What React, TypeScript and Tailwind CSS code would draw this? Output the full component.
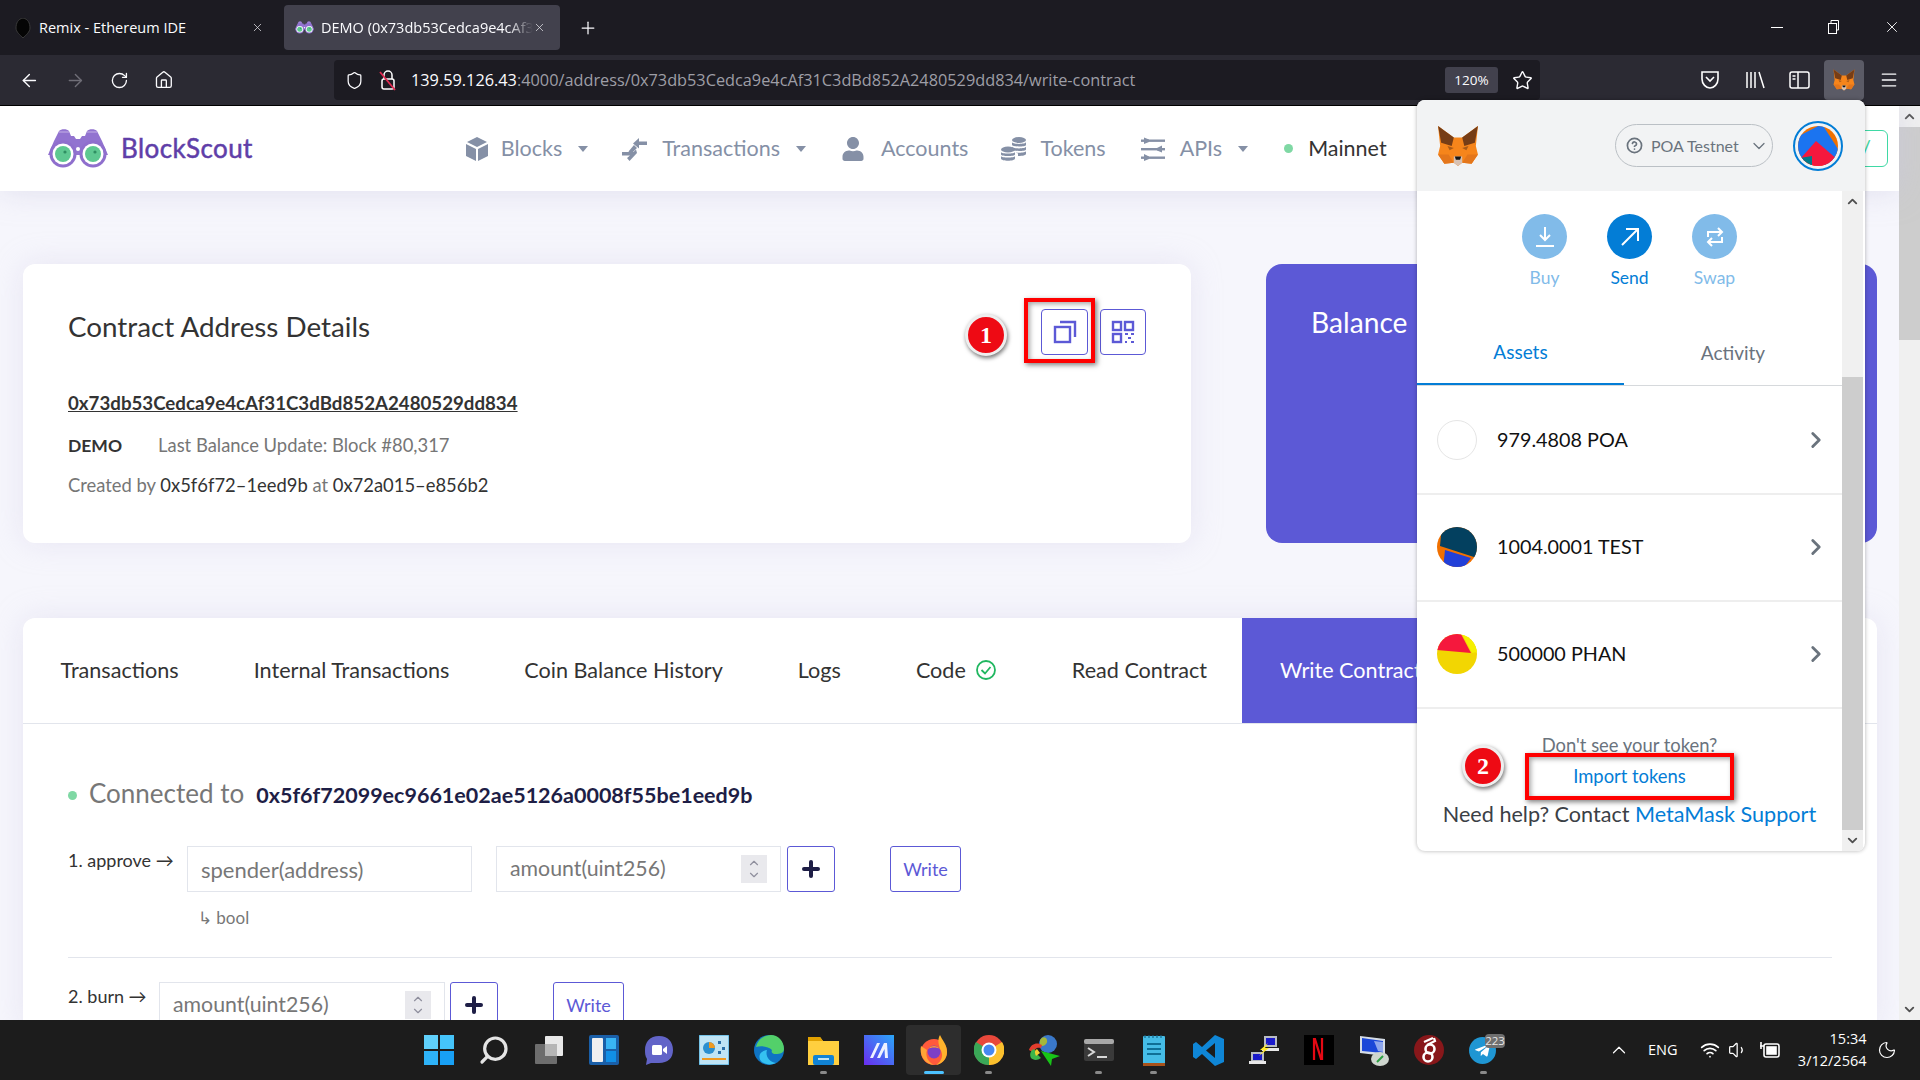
import { ArrowLeft, ArrowRight, ChevronDown, ChevronRight, ChevronUp, House, Menu, RotateCw, Shield, Star, X, Plus, Wifi, Volume1, Moon, Search, CircleHelp } from "lucide-react";
import { FaUser, FaTelegramPlane } from "react-icons/fa";

const site = "font-['Lato',sans-serif]";
const mm = "font-['Lato',sans-serif]";
const ui = "font-['Open_Sans',sans-serif]";

function Fox({ size }: { size: number }) {
  return (
    <svg width={size} height={size} viewBox="0 0 40 40">
      <polygon points="1,1 16,12 24,12 39,1 37,20 39,28 33,37 24,36 20,39 16,36 7,37 1,28 3,20" fill="#f6851b" />
      <polygon points="1,1 16,12 14,20 4,17" fill="#763d16" />
      <polygon points="39,1 24,12 26,20 36,17" fill="#763d16" />
      <polygon points="1,28 7,37 16,36 11,28" fill="#e4761b" />
      <polygon points="39,28 33,37 24,36 29,28" fill="#e4761b" />
      <polygon points="16,30 24,30 24,36 20,39 16,36" fill="#d7c1b3" />
      <polygon points="17,30 23,30 22,33 18,33" fill="#161616" />
      <polygon points="10,20 16,22 12,24" fill="#763d16" opacity="0.6" />
      <polygon points="30,20 24,22 28,24" fill="#763d16" opacity="0.6" />
    </svg>
  );
}

function Binoculars({ size }: { size: number }) {
  return (
    <svg width={size} height={size * 0.667} viewBox="0 0 60 40">
      <path d="M11 3C13 0.5 19 0.5 21 3L23 8H26L28 11H32L34 8H37L39 3C41 0.5 47 0.5 49 3L54 13L60 27H0L6 13Z" fill="#9273d0" />
      <path d="M11 4H21M39 4H49" stroke="#c4b2e6" strokeWidth="1.2" />
      <circle cx="15" cy="26" r="13.5" fill="#8f6fcd" />
      <circle cx="45" cy="26" r="13.5" fill="#8f6fcd" />
      <circle cx="15" cy="26" r="10.5" fill="#fff" />
      <circle cx="45" cy="26" r="10.5" fill="#fff" />
      <circle cx="15" cy="26" r="8" fill="#5ec891" />
      <circle cx="45" cy="26" r="8" fill="#5ec891" />
      <circle cx="17" cy="24" r="1.6" fill="#2f8f62" />
      <circle cx="47" cy="24" r="1.6" fill="#2f8f62" />
      <circle cx="30" cy="21" r="2" fill="#fff" />
    </svg>
  );
}

function Caret({ className = "" }: { className?: string }) {
  return <span className={`inline-block h-0 w-0 border-x-[5.5px] border-t-[6px] border-x-transparent border-t-[#8590a6] ${className}`} />;
}

function TabClose() {
  return <X size={13} strokeWidth={1.4} className="text-[#e0e0e6]" />;
}

function BrowserChrome() {
  return (
    <>
      <div className={`flex h-[55px] items-start bg-[#1c1b22] text-[14.5px] text-[#fbfbfe] ${ui}`}>
        <div className="mt-[5px] flex h-[45px] w-[276px] items-center pl-[14px] pr-[12px]">
          <svg width="18" height="20" viewBox="0 0 18 20"><path d="M9 0 C14 1 16 5 16 10 C16 14 12 17 9 20 C6 17 2 14 2 10 C2 5 4 1 9 0Z" fill="#050505" stroke="#3a3a3a" /></svg>
          <span className="ml-[7px] flex-1">Remix - Ethereum IDE</span>
          <TabClose />
        </div>
        <div className="mt-[5px] ml-[8px] flex h-[45px] w-[276px] items-center rounded-[4px] bg-[#42414d] pl-[11px] pr-[14px]">
          <Binoculars size={19} />
          <span className="ml-[7px] w-[212px] whitespace-nowrap [mask-image:linear-gradient(to_right,black_88%,transparent)]">DEMO (0x73db53Cedca9e4cAf3</span>
          <span className="ml-auto"><TabClose /></span>
        </div>
        <Plus size={20} strokeWidth={1.5} className="ml-[18px] mt-[18px]" />
        <div className="ml-auto mt-[18px] flex items-center gap-[43px] pr-[19px]">
          <div className="h-px w-[12px] bg-white" />
          <svg width="14" height="14" viewBox="0 0 14 14" fill="none" stroke="#fff"><rect x="2.5" y="3.5" width="8" height="10" /><path d="M5 3V0.5H12.5V10H10.5" /></svg>
          <X size={18} strokeWidth={1.2} className="text-white" />
        </div>
      </div>
      <div className="flex h-[51px] items-start border-b border-black bg-[#2b2a33] pt-[5px] text-[#fbfbfe]">
        <div className="flex h-[40px] w-[174px] items-center gap-[25px] pl-[19px]">
          <ArrowLeft size={21} strokeWidth={1.6} />
          <ArrowRight size={21} strokeWidth={1.6} className="text-[#6f6e77]" />
          <RotateCw size={19} strokeWidth={1.7} />
          <House size={20} strokeWidth={1.6} />
        </div>
        <div className="ml-[160px] flex h-[40px] w-[1206px] items-center rounded-[4px] bg-[#1c1b22] pl-[11px] pr-[7px]">
          <Shield size={19} strokeWidth={1.6} />
          <svg width="18" height="22" viewBox="0 0 18 22" fill="none" className="ml-[15px]">
            <path d="M5 10V6a4 4 0 0 1 8 0v4" stroke="#fff" strokeWidth="1.5" />
            <rect x="3" y="10" width="12" height="10" rx="2" stroke="#fff" strokeWidth="1.5" />
            <path d="M1 3L16 21" stroke="#e22850" strokeWidth="1.8" />
          </svg>
          <span className={`ml-[14px] whitespace-nowrap text-[16.3px] text-[#9e9ea6] ${ui}`}>
            <span className="text-[#fbfbfe]">139.59.126.43</span>:4000/address/0x73db53Cedca9e4cAf31C3dBd852A2480529dd834/write-contract
          </span>
          <span className={`ml-auto flex h-[26px] w-[53px] items-center justify-center rounded-[3px] bg-[#42414d] text-[13.5px] ${ui}`}>120%</span>
          <Star size={21} strokeWidth={1.6} className="ml-[14px]" />
        </div>
        <div className="ml-[159px] flex h-[40px] items-center">
          <svg width="22" height="22" viewBox="0 0 22 22" fill="none" stroke="#fff" strokeWidth="1.6" className="mr-[23px]"><path d="M3 3H19V10C19 15 15 19 11 19C7 19 3 15 3 10Z" /><path d="M7 8L11 12L15 8" /></svg>
          <svg width="22" height="22" viewBox="0 0 22 22" fill="none" stroke="#fff" strokeWidth="1.5" className="mr-[23px]"><path d="M3 3V19M7 3V19M11 3V19M15 3L20 19" /></svg>
          <svg width="21" height="20" viewBox="0 0 21 20" fill="none" stroke="#fff" strokeWidth="1.5" className="mr-[14px]"><rect x="1" y="2" width="19" height="16" rx="2" /><path d="M9 2V18" /><path d="M3.5 6H6.5M3.5 9H6.5" /></svg>
          <div className="flex h-[40px] w-[40px] items-center justify-center rounded-[4px] bg-[#5b5b66]"><Fox size={22} /></div>
          <Menu size={20} strokeWidth={1.6} className="ml-[15px]" />
        </div>
      </div>
    </>
  );
}

function NavItem({ icon, label, caret, gap = 14, left }: { icon: React.ReactNode; label: string; caret?: boolean; gap?: number; left: number }) {
  return (
    <div className="flex items-center" style={{ marginLeft: left }}>
      {icon}
      <span style={{ marginLeft: gap }}>{label}</span>
      {caret && <Caret className="ml-[16px]" />}
    </div>
  );
}

function CubeIcon() {
  return (
    <svg width="22" height="24" viewBox="0 0 22 24" fill="#8590a6">
      <polygon points="11,0 21,5 11,10 1,5" />
      <polygon points="0,7 10,12 10,24 0,19" />
      <polygon points="22,7 12,12 12,24 22,19" />
    </svg>
  );
}

function TxIcon() {
  return (
    <svg width="25" height="24" viewBox="0 0 25 24" fill="#8590a6">
      <path d="M11 6L17 0.5V4H25V7.5H17V11Z" transform="translate(0 0.5)" />
      <path d="M14 12.5L11.5 15H0V18.5H8L5 21L7.5 24L15 16Z" />
      <path d="M12 8L15 11L9 17L6.5 14.5Z" />
    </svg>
  );
}

function CoinsIcon() {
  return (
    <svg width="25" height="24" viewBox="0 0 25 24" fill="#8590a6">
      <ellipse cx="18" cy="3" rx="7" ry="3" />
      <path d="M11 5V8C11 10 25 10 25 8V5C25 7.5 11 7.5 11 5ZM11 9.5V12.5C11 14.5 25 14.5 25 12.5V9.5C25 12 11 12 11 9.5ZM15 15.5C19 16 25 15.5 25 14V17C25 18 22 19 17 19V16.5Z" />
      <ellipse cx="7" cy="12.5" rx="7" ry="3" />
      <path d="M0 15V17.5C0 19.5 14 19.5 14 17.5V15C14 17 0 17 0 15ZM0 19V21.5C0 24.5 14 24.5 14 21.5V19C14 21 0 21 0 19Z" />
    </svg>
  );
}

function ApiIcon() {
  return (
    <svg width="24" height="24" viewBox="0 0 24 24" fill="#8590a6">
      <rect x="0" y="2.5" width="24" height="2.4" />
      <rect x="0" y="11" width="24" height="2.4" />
      <rect x="0" y="19.5" width="24" height="2.4" />
      <polygon points="3,0.5 8,2.5 8,5 3,7" />
      <polygon points="21,8.5 16,11 16,13.5 21,15.5" />
      <polygon points="3,17 8,19.5 8,22 3,24" />
    </svg>
  );
}

function SiteHeader() {
  return (
    <header className={`relative flex h-[85px] shrink-0 items-center bg-white text-[21.5px] text-[#8590a6] shadow-[0_0_30px_rgba(202,199,226,0.5)] ${site}`}>
      <div className="ml-[48px] flex items-center">
        <Binoculars size={60} />
        <span className="ml-[13px] text-[26px] tracking-[0.4px] text-[#5f3ea8] [-webkit-text-stroke:0.5px_#5f3ea8]">BlockScout</span>
      </div>
      <NavItem left={213} icon={<CubeIcon />} label="Blocks" caret gap={13} />
      <NavItem left={34} icon={<TxIcon />} label="Transactions" caret gap={15} />
      <NavItem left={35} icon={<FaUser size={24} />} label="Accounts" gap={16} />
      <NavItem left={33} icon={<CoinsIcon />} label="Tokens" />
      <NavItem left={35} icon={<ApiIcon />} label="APIs" caret gap={15} />
      <div className="ml-[36px] flex items-center text-[#333333]">
        <span className="mr-[15px] h-[9px] w-[9px] rounded-full bg-[#7fd8a4]" />
        <span>Mainnet</span>
      </div>
      <div className="absolute left-[1800px] top-[24px] flex h-[37px] w-[88px] items-center justify-end rounded-[6px] border border-[#3fd9a5] pr-[16px] text-[#3fd9a5]">/</div>
    </header>
  );
}

function AddressCard() {
  return (
    <section className={`h-[279px] w-[1168px] shrink-0 rounded-[12px] bg-white pl-[45px] pt-[46px] shadow-[0_0_30px_rgba(202,199,226,0.35)] ${site}`}>
      <div className="flex items-start">
        <h1 className="w-[302px] whitespace-nowrap text-[27.8px] leading-[34px] text-[#333333]">Contract Address Details</h1>
        <div className="ml-[671px] mt-[-1px] flex gap-[12px]">
          <button className="flex h-[46px] w-[47px] items-center justify-center rounded-[4px] border border-[#5c59d6]">
            <svg width="24" height="24" viewBox="0 0 24 24" fill="none" stroke="#5c59d6" strokeWidth="2.4"><rect x="2" y="7" width="15" height="15" /><path d="M7 2H22V17" /></svg>
          </button>
          <button className="flex h-[46px] w-[46px] items-center justify-center rounded-[4px] border border-[#5c59d6]">
            <svg width="24" height="24" viewBox="0 0 24 24" fill="none" stroke="#5c59d6" strokeWidth="2.4"><rect x="2" y="2" width="8" height="8" /><rect x="14" y="2" width="8" height="8" /><rect x="2" y="14" width="8" height="8" /><path d="M14 14H17M20 14H23M17 18H20M14 22H16M20 22H23" strokeWidth="2" /></svg>
          </button>
        </div>
      </div>
      <p className="mt-[36px] text-[18.7px] font-bold leading-[24px] text-[#333333] underline">0x73db53Cedca9e4cAf31C3dBd852A2480529dd834</p>
      <p className="mt-[18px] text-[18.4px] leading-[24px] text-[#767676]"><b className="mr-[36px] text-[17.5px] text-[#333333]">DEMO</b>Last Balance Update: Block #80,317</p>
      <p className="mt-[15px] text-[18.4px] leading-[24px] text-[#767676]">Created by <span className="text-[#333333]">0x5f6f72–1eed9b</span> at <span className="text-[#333333]">0x72a015–e856b2</span></p>
    </section>
  );
}

function NumberField({ className }: { className: string }) {
  return (
    <div className={`flex h-[46px] items-center border border-[#e2e5ec] pl-[13px] pr-[13px] text-[21.3px] text-[#777777] ${className}`}>
      <span>amount(uint256)</span>
      <div className="ml-auto flex h-[28px] w-[26px] flex-col items-center justify-center bg-[#e9e9ed] text-[#8f8f9d]">
        <ChevronUp size={14} className="-mb-[1px]" />
        <ChevronDown size={14} className="-mt-[1px]" />
      </div>
    </div>
  );
}

function PlusButton({ className = "" }: { className?: string }) {
  return (
    <button className={`flex h-[46px] w-[48px] items-center justify-center rounded-[3px] border border-[#5c59d6] ${className}`}>
      <Plus size={24} strokeWidth={4} className="text-[#1e1e46]" />
    </button>
  );
}

function WriteButton({ className = "" }: { className?: string }) {
  return <button className={`h-[46px] w-[71px] rounded-[3px] border border-[#5c59d6] text-[18px] text-[#5c59d6] ${className}`}>Write</button>;
}

function TabsCard() {
  const tabs = ["Transactions", "Internal Transactions", "Coin Balance History", "Logs"];
  return (
    <section className={`mt-[75px] w-[1854px] rounded-t-[12px] bg-white shadow-[0_0_30px_rgba(202,199,226,0.35)] ${site}`}>
      <div className="flex h-[106px] items-center border-b border-[#e2e5ec] text-[21.6px] text-[#333333]">
        {tabs.map((t) => <span key={t} className="px-[37.5px]">{t}</span>)}
        <span className="flex items-center gap-[9px] px-[37.5px]">Code
          <svg width="22" height="22" viewBox="0 0 22 22" fill="none" stroke="#20b760" strokeWidth="1.8"><circle cx="11" cy="11" r="9" /><path d="M6.5 11L10 14.5L15.5 8" /></svg>
        </span>
        <span className="pl-[37.5px] pr-[35px]">Read Contract</span>
        <span className="flex h-full w-[300px] items-center bg-[#5c59d6] pl-[38px] text-white">Write Contract</span>
      </div>
      <div className="px-[45px] pt-[52px]">
        <div className="flex items-center">
          <span className="h-[9px] w-[9px] rounded-full bg-[#7fd8a4]" />
          <span className="ml-[12px] -translate-y-[2px] text-[26px] text-[#777777]">Connected to</span>
          <span className="ml-[12px] text-[21.5px] font-bold text-[#1e1e46]">0x5f6f72099ec9661e02ae5126a0008f55be1eed9b</span>
        </div>
        <div className="mt-[31px] flex items-start text-[18px] text-[#333333]">
          <span className="w-[119px] leading-[28px]">1. approve →</span>
          <div className="flex h-[46px] w-[285px] items-center border border-[#e2e5ec] pl-[13px] text-[22px] text-[#777777]">spender(address)</div>
          <NumberField className="ml-[24px] w-[285px]" />
          <PlusButton className="ml-[6px]" />
          <WriteButton className="ml-[55px]" />
        </div>
        <p className="mt-[14px] pl-[130px] text-[17px] leading-[24px] text-[#777777]">↳ bool</p>
        <div className="mt-[27px] h-px w-[1764px] bg-[#e2e5ec]" />
        <div className="mt-[24px] flex items-start text-[18px] text-[#333333]">
          <span className="w-[91px] leading-[28px]">2. burn →</span>
          <NumberField className="w-[286px]" />
          <PlusButton className="ml-[5px]" />
          <WriteButton className="ml-[55px]" />
        </div>
      </div>
    </section>
  );
}

function Scrollbar() {
  return (
    <div className="flex w-[21px] shrink-0 flex-col bg-[#f0f0f0] text-[#505050]">
      <div className="flex h-[21px] items-center justify-center"><ChevronUp size={15} strokeWidth={3} /></div>
      <div className="h-[213px] bg-[#cdcdcd]" />
      <div className="mt-auto flex h-[21px] items-center justify-center"><ChevronDown size={15} strokeWidth={3} /></div>
    </div>
  );
}

function Page() {
  return (
    <div className="flex h-[914px] overflow-hidden bg-[#f6f6fc]">
      <div className="min-w-0 flex-1">
        <SiteHeader />
        <div className="pl-[23px] pt-[73px]">
          <div className="flex">
            <AddressCard />
            <section className={`ml-[75px] h-[279px] w-[611px] shrink-0 rounded-[16px] bg-[#5c59d6] pl-[45px] pt-[37px] text-[28.2px] text-white ${site}`}>Balance</section>
          </div>
          <TabsCard />
        </div>
      </div>
      <Scrollbar />
    </div>
  );
}

function ActionButton({ label, active, children }: { label: string; active?: boolean; children: React.ReactNode }) {
  return (
    <div className="flex w-[85px] flex-col items-center">
      <div className={`flex h-[45px] w-[45px] items-center justify-center rounded-full ${active ? "bg-[#037dd6]" : "bg-[#81bbe9]"}`}>{children}</div>
      <span className={`mt-[8px] text-[17.5px] leading-[22px] ${active ? "text-[#037dd6]" : "text-[#81bbe9]"}`}>{label}</span>
    </div>
  );
}

function TokenRow({ label, icon }: { label: string; icon: React.ReactNode }) {
  return (
    <div className="flex h-[107px] shrink-0 items-center border-b-2 border-[#eeeeee] pb-[1px] pl-[20px] pr-[13px]">
      {icon}
      <span className="ml-[20px] text-[19.8px] text-[#111111]">{label}</span>
      <ChevronRight size={26} strokeWidth={2.6} className="ml-auto text-[#6a737d]" />
    </div>
  );
}

function Pie({ children }: { children: React.ReactNode }) {
  return <svg width="40" height="40" viewBox="0 0 40 40" className="shrink-0"><defs><clipPath id="round"><circle cx="20" cy="20" r="20" /></clipPath></defs><g clipPath="url(#round)">{children}</g></svg>;
}

function MetaMaskPopup() {
  return (
    <div className={`absolute left-[1417px] top-[100px] flex h-[751px] w-[448px] flex-col overflow-hidden rounded-[8px] bg-white shadow-[0_0_4px_rgba(0,0,0,0.3)] ${mm}`}>
      <div className="flex h-[91px] shrink-0 items-center bg-[#f2f3f4] pl-[20px]">
        <Fox size={42} />
        <div className="ml-[136px] flex h-[43px] w-[158px] items-center rounded-full border border-[#bbc0c5] pl-[10px] text-[16px] text-[#6a737d]">
          <CircleHelp size={17} strokeWidth={2.4} />
          <span className="ml-[8px]">POA Testnet</span>
          <ChevronDown size={20} strokeWidth={1.5} className="ml-[10px]" />
        </div>
        <div className="ml-[20px] flex h-[50px] w-[50px] items-center justify-center rounded-full border-2 border-[#037dd6]">
          <svg width="40" height="40" viewBox="0 0 40 40"><defs><clipPath id="acct"><circle cx="20" cy="20" r="20" /></clipPath></defs><g clipPath="url(#acct)"><rect width="40" height="40" fill="#f07000" /><polygon points="-3,12 24,-2 42,26 30,40 0,34" fill="#1b74f0" /><polygon points="3,32 18,15 40,34 24,44 10,44" fill="#f5183d" /><polygon points="2,32 14,30 14,42 2,42" fill="#007a8a" /></g></svg>
        </div>
      </div>
      <div className="flex min-h-0 flex-1">
        <div className="flex w-[425px] flex-col">
          <div className="flex h-[142px] shrink-0 justify-center pt-[23px]">
            <ActionButton label="Buy">
              <svg width="24" height="24" viewBox="0 0 24 24" fill="none" stroke="#fff" strokeWidth="2"><path d="M12 2V15M7 10L12 15L17 10M3 21H21" /></svg>
            </ActionButton>
            <ActionButton label="Send" active>
              <svg width="24" height="24" viewBox="0 0 24 24" fill="none" stroke="#fff" strokeWidth="2"><path d="M4 20L20 4M8 4H20V16" /></svg>
            </ActionButton>
            <ActionButton label="Swap">
              <svg width="24" height="24" viewBox="0 0 24 24" fill="none" stroke="#fff" strokeWidth="2"><path d="M5 12V7H19M15 3L19 7L15 11M19 12V17H5M9 13L5 17L9 21" /></svg>
            </ActionButton>
          </div>
          <div className="flex h-[53px] shrink-0 border-b border-[#d6d9dc] text-[19px]">
            <div className="flex w-[207px] items-center justify-center border-b-2 border-[#037dd6] pb-[12px] text-[#037dd6]">Assets</div>
            <div className="flex flex-1 items-center justify-center pb-[12px] text-[#6a737d]">Activity</div>
          </div>
          <div className="pt-[2px]">
            <TokenRow label="979.4808 POA" icon={<span className="h-[40px] w-[40px] shrink-0 rounded-full border border-[#e5e5e5]" />} />
            <TokenRow label="1004.0001 TEST" icon={<Pie><rect width="40" height="40" fill="#f07000" /><polygon points="3,19 40,31 40,-2 5,-2" fill="#03405f" /><polygon points="8,23 34,31 26,42 6,42" fill="#2240d8" /></Pie>} />
            <TokenRow label="500000 PHAN" icon={<Pie><rect width="40" height="40" fill="#f2d602" /><polygon points="0,16 34,19 24,0 0,0" fill="#f5183d" /><polygon points="25,0 40,0 40,18 35,19" fill="#f5f000" /></Pie>} />
          </div>
          <div className="pt-[24px] text-center text-[18.4px] text-[#6a737d]">
            <p className="leading-[24px]">Don't see your token?</p>
            <p className="mt-[7px] leading-[24px] text-[#037dd6]">Import tokens</p>
            <p className="mt-[14px] whitespace-nowrap text-[21.6px] leading-[24px] text-[#3b4046]">Need help? Contact <span className="text-[#037dd6]">MetaMask Support</span></p>
          </div>
        </div>
        <div className="flex w-[21px] shrink-0 flex-col bg-[#f0f0f0] text-[#505050]">
          <div className="flex h-[21px] items-center justify-center"><ChevronUp size={15} strokeWidth={3} /></div>
          <div className="mt-[165px] h-[453px] bg-[#cdcdcd]" />
          <div className="mt-auto flex h-[21px] items-center justify-center"><ChevronDown size={15} strokeWidth={3} /></div>
        </div>
      </div>
    </div>
  );
}

function Badge({ n, className }: { n: number; className: string }) {
  return (
    <div className={`absolute flex h-[42px] w-[42px] items-center justify-center rounded-full border-[3px] border-[#eeeeee] bg-[#ee0a14] text-[24px] font-bold text-white shadow-[1px_2px_4px_rgba(0,0,0,0.55)] font-['Liberation_Serif',serif] ${className}`}>{n}</div>
  );
}

function Annotations() {
  return (
    <>
      <Badge n={1} className="left-[965px] top-[314px]" />
      <div className="absolute left-[1024px] top-[298px] h-[65px] w-[71px] border-[4px] border-[#ff0000] shadow-[2px_2px_5px_rgba(0,0,0,0.5),inset_2px_2px_5px_rgba(0,0,0,0.35)]" />
      <Badge n={2} className="left-[1462px] top-[745px]" />
      <div className="absolute left-[1525px] top-[753px] h-[47px] w-[209px] border-[4px] border-[#ff0000] shadow-[2px_2px_5px_rgba(0,0,0,0.5),inset_2px_2px_5px_rgba(0,0,0,0.35)]" />
    </>
  );
}

function TaskbarIcon({ children, dot, active }: { children: React.ReactNode; dot?: boolean; active?: boolean }) {
  return (
    <div className={`relative flex h-[50px] w-[55px] items-center justify-center ${active ? "rounded-[4px] bg-[#2d2d2d]" : ""}`}>
      {children}
      {dot && <span className={`absolute bottom-[1px] h-[3px] rounded-full ${active ? "w-[20px] bg-[#4cc2ff]" : "w-[7px] bg-[#8a8a8a]"}`} />}
    </div>
  );
}

function Taskbar() {
  return (
    <div className={`flex h-[60px] shrink-0 items-center bg-[#1c1c1c] pl-[411px] text-white ${ui}`}>
      <TaskbarIcon>
        <div className="grid h-[30px] w-[30px] grid-cols-2 gap-[2px]">
          <span className="bg-[#5fd0fb]" /><span className="bg-[#45c4fa]" /><span className="bg-[#2eb3f8]" /><span className="bg-[#18a0f5]" />
        </div>
      </TaskbarIcon>
      <TaskbarIcon><Search size={32} strokeWidth={2.4} className="-scale-x-100 text-[#e4e4e4]" /></TaskbarIcon>
      <TaskbarIcon>
        <svg width="32" height="30" viewBox="0 0 32 30"><rect x="12" y="1" width="18" height="20" rx="1" fill="#e8e8e8" /><rect x="2" y="9" width="22" height="20" rx="1" fill="#6d6d6d" /><rect x="12" y="9" width="12" height="12" fill="#b5b5b5" /></svg>
      </TaskbarIcon>
      <TaskbarIcon>
        <svg width="30" height="30" viewBox="0 0 30 30"><rect width="30" height="30" rx="2" fill="#1a5fa8" /><rect x="3" y="3" width="11" height="24" rx="1" fill="#f0f0f0" /><rect x="17" y="3" width="10" height="11" fill="#39b4f4" /><rect x="17" y="16" width="10" height="11" fill="#118fe6" /></svg>
      </TaskbarIcon>
      <TaskbarIcon>
        <svg width="30" height="30" viewBox="0 0 30 30"><path d="M15 1C24 1 29 7 29 15C29 23 24 28 15 28H7L2 30L3 24C1 21 1 18 1 15C1 7 6 1 15 1Z" fill="#6264c8" /><rect x="8" y="10" width="10" height="10" rx="1.5" fill="#fff" /><path d="M19 14L23 11V19L19 16Z" fill="#fff" /></svg>
      </TaskbarIcon>
      <TaskbarIcon>
        <svg width="30" height="30" viewBox="0 0 30 30"><rect width="30" height="30" fill="#bfe4f5" stroke="#2d9fd8" /><circle cx="10" cy="13" r="6" fill="#2b8fd0" /><path d="M10 13V7A6 6 0 0 1 16 13Z" fill="#ef9a22" /><rect x="19" y="6" width="3" height="3" fill="#2b6fa8" /><rect x="23" y="12" width="3" height="3" fill="#2b6fa8" /><rect x="19" y="16" width="3" height="3" fill="#2b6fa8" /><rect x="3" y="23" width="24" height="2" fill="#ef9a22" /></svg>
      </TaskbarIcon>
      <TaskbarIcon>
        <svg width="30" height="30" viewBox="0 0 30 30"><circle cx="15" cy="15" r="15" fill="#0f74c4" /><path d="M2 12C4 3 12 0 17 0C24 0 30 6 30 14C30 18 26 19 22 19C18 19 17 17 18 15C15 12 8 10 2 12Z" fill="#53d06a" /><path d="M13 15C11 21 15 27 22 28C18 30 12 30 8 27C4 24 4 16 13 15Z" fill="#35c1f1" /></svg>
      </TaskbarIcon>
      <TaskbarIcon dot>
        <svg width="31" height="29" viewBox="0 0 31 29"><path d="M0 3C0 2 1 1 2 1H12L15 5H31V29H0Z" fill="#ffcf3f" /><path d="M0 1H12L15 5H0Z" fill="#e1a100" /><rect x="5" y="19" width="21" height="10" rx="2" fill="#1183d4" /><rect x="10" y="22" width="11" height="2" fill="#bfe4f5" /></svg>
      </TaskbarIcon>
      <TaskbarIcon>
        <svg width="30" height="30" viewBox="0 0 30 30"><defs><linearGradient id="ma" x1="1" y1="0" x2="0" y2="1"><stop offset="0" stopColor="#2aa7f8" /><stop offset="1" stopColor="#6a2cf0" /></linearGradient></defs><rect width="30" height="30" fill="url(#ma)" /><path d="M6 23L13 8H16L9 23ZM13 23L20 8H23L24 23H21L20.5 14L16 23Z" fill="#eef2ff" /></svg>
      </TaskbarIcon>
      <TaskbarIcon dot active>
        <svg width="32" height="32" viewBox="0 0 32 32"><circle cx="16" cy="18" r="13" fill="#ff5a3c" /><path d="M22 1C24 6 29 10 29 18C29 25 24 30 18 31C24 27 26 21 22 15C21 11 19 6 22 1Z" fill="#ffb32c" /><path d="M3 12C1 20 6 30 16 31C10 28 7 22 9 16Z" fill="#ffa436" /><circle cx="16" cy="18" r="6.5" fill="#7d3fc6" /><path d="M10 15C13 11 19 11 22 15C19 13 13 13 10 15Z" fill="#ff9b2f" /></svg>
      </TaskbarIcon>
      <TaskbarIcon dot>
        <svg width="30" height="30" viewBox="0 0 30 30"><circle cx="15" cy="15" r="15" fill="#e8483b" /><path d="M15 15L28 7A15 15 0 0 1 15 30Z" fill="#fbc02d" /><path d="M15 15L15 30A15 15 0 0 1 2 7Z" fill="#3aa757" /><circle cx="15" cy="15" r="7.5" fill="#fff" /><circle cx="15" cy="15" r="5.5" fill="#4688f1" /></svg>
      </TaskbarIcon>
      <TaskbarIcon>
        <svg width="32" height="32" viewBox="0 0 32 32"><circle cx="20" cy="10" r="9" fill="#3a78c9" /><path d="M12 6C15 2 18 3 19 6C20 10 15 13 12 12Z" fill="#a5b83a" /><path d="M1 16C3 9 10 8 14 11L13 14C9 13 6 15 6 19Z" fill="#e33d2e" /><path d="M3 24C1 20 3 16 6 15L9 20L13 24C9 27 5 26 3 24Z" fill="#3cb54a" /><path d="M8 22C6 18 7 16 9 15L12 19Z" fill="#f0cf30" /><polygon points="13,17 32,22 24,25 23,32" fill="#18c418" /></svg>
      </TaskbarIcon>
      <TaskbarIcon dot>
        <svg width="30" height="30" viewBox="0 0 30 30"><rect width="30" height="22" y="4" rx="2" fill="#3a3a3a" /><rect width="30" height="5" y="4" rx="2" fill="#a8a8a8" /><path d="M4 13L10 17L4 21" fill="none" stroke="#d8d8d8" strokeWidth="2" /><path d="M13 22H23" stroke="#d8d8d8" strokeWidth="2" /></svg>
      </TaskbarIcon>
      <TaskbarIcon dot>
        <svg width="22" height="31" viewBox="0 0 22 31"><rect width="22" height="28" y="1" rx="1" fill="#45bce6" /><path d="M2 0.5V3M6 0.5V3M10 0.5V3M14 0.5V3M18 0.5V3" stroke="#1f7ea5" strokeWidth="1.6" /><rect y="28" width="22" height="3" fill="#a8521a" /><path d="M4 9H18M4 14H18M4 19H18" stroke="#0f6f96" strokeWidth="2" /></svg>
      </TaskbarIcon>
      <TaskbarIcon>
        <svg width="31" height="31" viewBox="0 0 31 31"><path d="M22 0L31 4V27L22 31L9 19L3 24L0 22V9L3 7L9 12Z" fill="#0f86d6" /><path d="M22 8L13 15.5L22 23Z" fill="#1c1c1c" /></svg>
      </TaskbarIcon>
      <TaskbarIcon>
        <svg width="30" height="30" viewBox="0 0 30 30"><rect x="15" y="1" width="13" height="11" fill="#b8bcc4" /><rect x="17" y="3" width="9" height="7" fill="#1a1acb" /><rect x="13" y="13" width="17" height="3" fill="#e8e8e8" /><rect x="2" y="17" width="13" height="9" fill="#b8bcc4" /><rect x="4" y="19" width="9" height="6" fill="#1a1acb" /><rect x="0" y="26" width="17" height="3" fill="#e8e8e8" /><path d="M19 8L11 15H15L10 21L20 13H16Z" fill="#ffe82c" /></svg>
      </TaskbarIcon>
      <TaskbarIcon>
        <div className="flex h-[30px] w-[30px] items-center justify-center bg-black font-['Liberation_Sans',sans-serif] text-[28px] font-bold leading-[30px] text-[#e50914]"><span className="scale-x-[0.62] scale-y-[1.1]">N</span></div>
      </TaskbarIcon>
      <TaskbarIcon>
        <svg width="30" height="32" viewBox="0 0 30 32"><path d="M1 2L26 5V22L1 19Z" fill="#d5dce6" /><path d="M3 4L24 7V19L3 17Z" fill="#1b47d8" /><path d="M15 7L24 8V18L19 17Z" fill="#8ea6ec" /><ellipse cx="21" cy="25" rx="9" ry="7" fill="#cfd6cf" /><path d="M18 28L24 22" stroke="#2aa040" strokeWidth="2" /></svg>
      </TaskbarIcon>
      <TaskbarIcon>
        <svg width="30" height="30" viewBox="0 0 30 30" fill="none"><circle cx="15" cy="15" r="15" fill="#88171a" /><circle cx="16" cy="14" r="4.5" stroke="#fff" strokeWidth="2.6" /><circle cx="14" cy="22" r="4.5" stroke="#fff" strokeWidth="2.6" /><path d="M10 7L19 3M20 3L21 6L13 10" stroke="#fff" strokeWidth="2.2" /></svg>
      </TaskbarIcon>
      <TaskbarIcon dot>
        <div className="flex h-[27px] w-[27px] -translate-x-[1px] items-center justify-center rounded-full bg-[#1f96d3]"><FaTelegramPlane size={17} /></div>
        <span className="absolute right-[6px] top-[9px] flex h-[14px] w-[20px] items-center justify-center rounded-[4px] bg-[#6f6f6f] text-[11.5px] leading-none text-[#e6e6e6]">223</span>
      </TaskbarIcon>
      <div className="ml-[97px] flex items-center text-[14.5px]">
        <ChevronUp size={22} strokeWidth={1.3} />
        <span className="ml-[18px]">ENG</span>
        <Wifi size={20} strokeWidth={2} className="ml-[22px]" />
        <Volume1 size={20} strokeWidth={1.5} className="ml-[8px]" />
        <svg width="22" height="18" viewBox="0 0 22 18" fill="none" stroke="#fff" strokeWidth="1.6" className="ml-[11px]"><rect x="5" y="3" width="15" height="13" rx="2" /><path d="M2 1V8M1 5H5" /><rect x="8" y="6" width="9" height="7" fill="#fff" /></svg>
        <div className="ml-[14px] w-[72px] text-right text-[14.5px] leading-[22px]"><div>15:34</div><div className="whitespace-nowrap">3/12/2564</div></div>
        <Moon size={20} strokeWidth={1.4} className="ml-[10px]" />
      </div>
    </div>
  );
}

export default function App() {
  return (
    <div className="relative flex h-[1080px] w-[1920px] flex-col overflow-hidden bg-[#1c1b22]">
      <BrowserChrome />
      <Page />
      <Taskbar />
      <MetaMaskPopup />
      <Annotations />
    </div>
  );
}
